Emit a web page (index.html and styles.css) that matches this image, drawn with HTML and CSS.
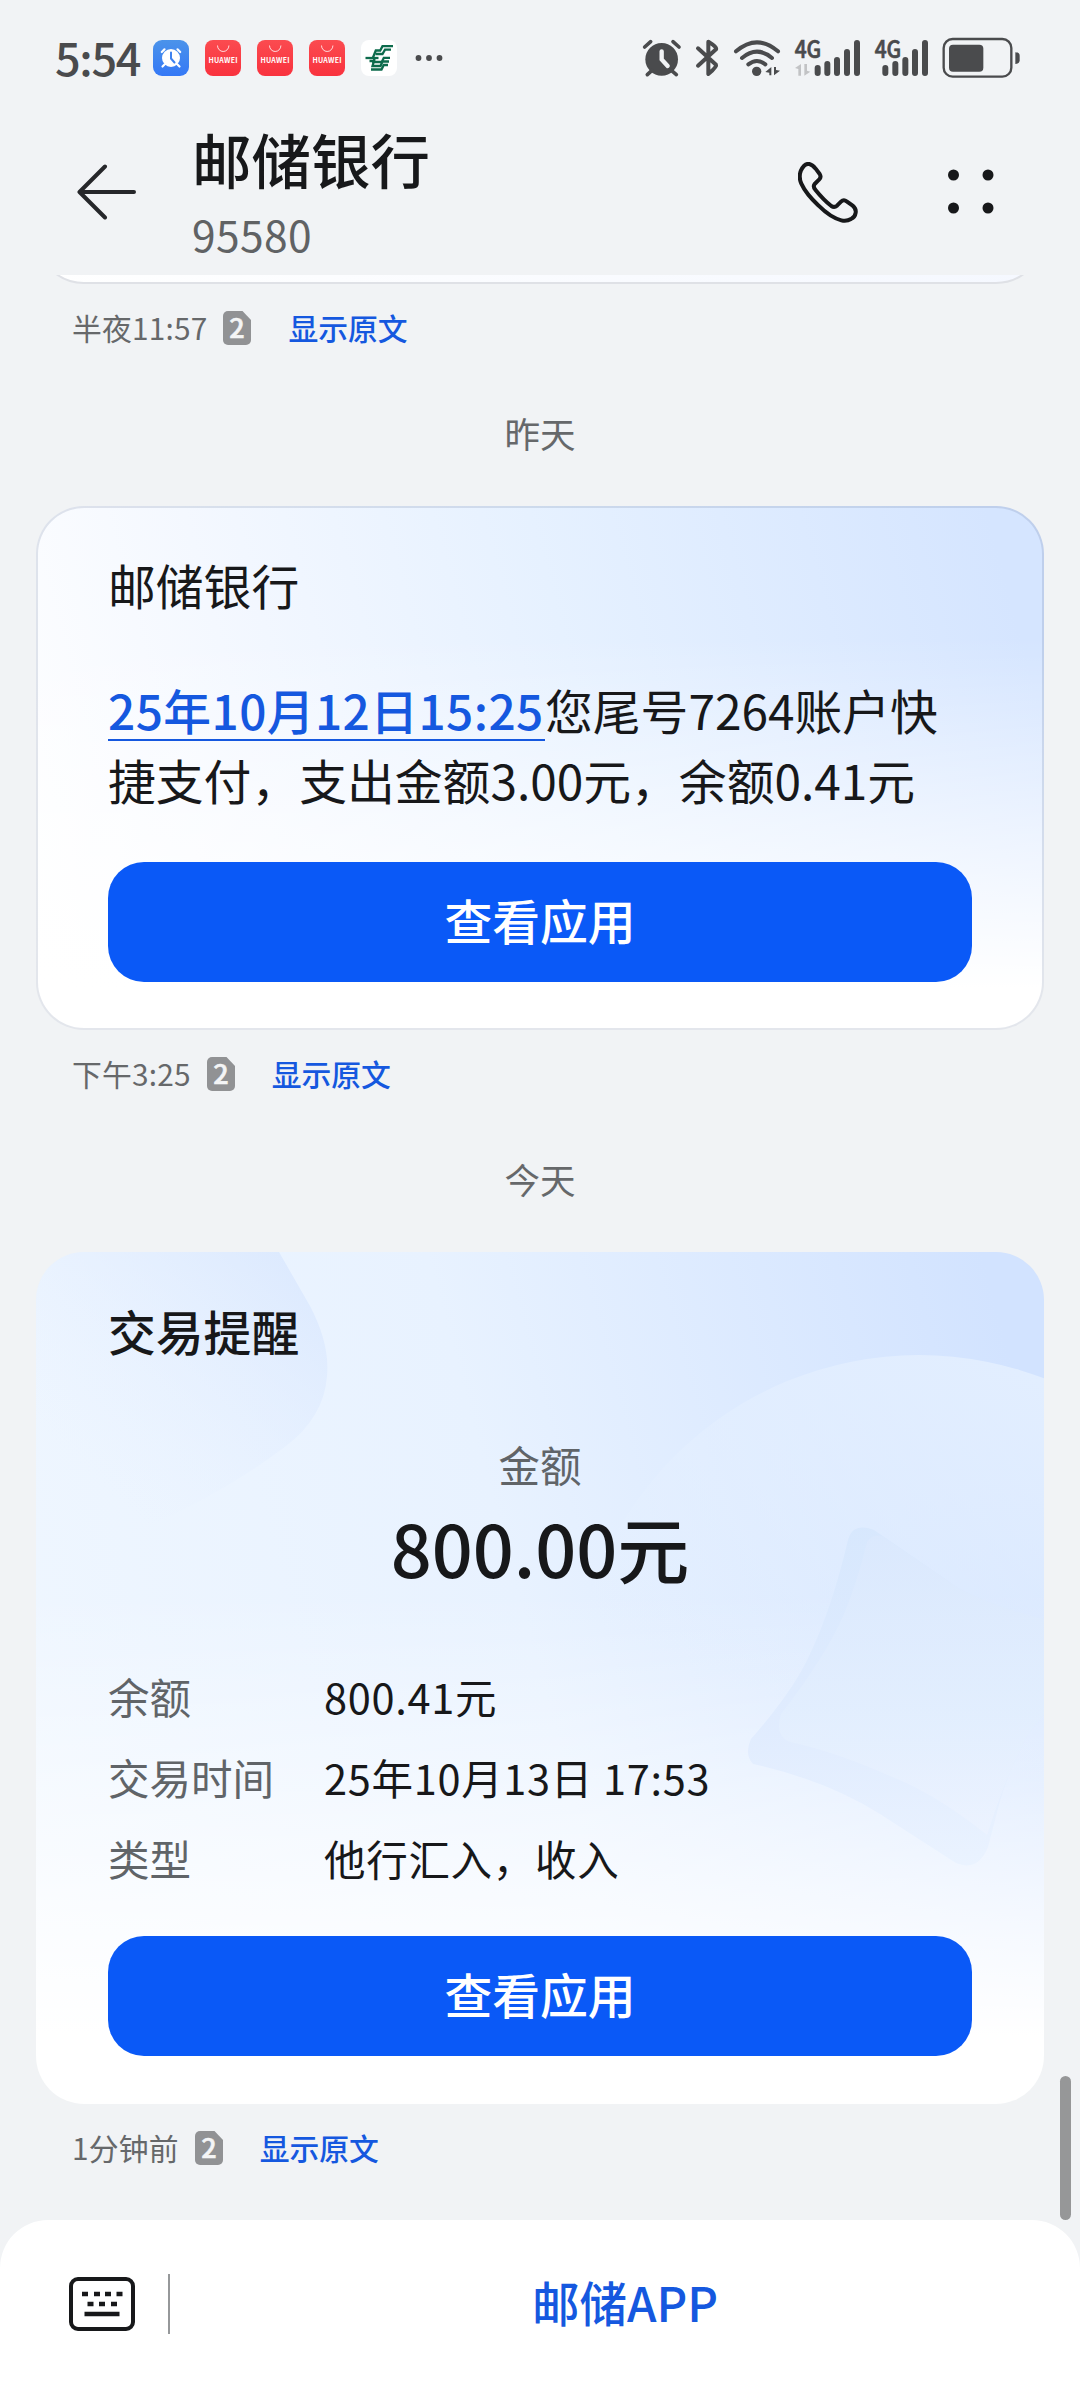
FILE: index.html
```html
<!DOCTYPE html>
<html lang="zh-CN">
<head>
<meta charset="utf-8">
<title>邮储银行</title>
<link rel="stylesheet" href="styles.css">
</head>
<body>
<svg class="defs" width="0" height="0" aria-hidden="true">
  <defs>
    <linearGradient id="red" x1="0" y1="0" x2="0" y2="1"><stop offset="0" stop-color="#fb4b50"/><stop offset="1" stop-color="#f9323e"/></linearGradient>
    <linearGradient id="clock" x1="0" y1="0" x2="0" y2="1"><stop offset="0" stop-color="#4b93ea"/><stop offset="1" stop-color="#3478f6"/></linearGradient>
    <symbol id="store" viewBox="0 0 36 36">
      <rect width="36" height="36" rx="8" fill="url(#red)"/>
      <path d="M12.500 5.500a5.700 6 0 0 0 11.400 0" fill="none" stroke="#fff" stroke-opacity=".8" stroke-width="1"/>
      <text x="18" y="23" text-anchor="middle" textLength="29" font-size="7" font-weight="700" fill="#fff">HUAWEI</text>
    </symbol>
    <symbol id="sim" viewBox="0 0 28 34">
      <path d="M5 0h14.500L28 9v20a5 5 0 0 1-5 5H5a5 5 0 0 1-5-5V5a5 5 0 0 1 5-5z" fill="#919294"/>
      <text x="14" y="27" text-anchor="middle" font-size="27" font-weight="500" fill="#f4f5f6" stroke="#f4f5f6" stroke-width=".6">2</text>
    </symbol>
  </defs>
</svg>
<div class="screen">
  <header class="header">
    <div class="status">
      <span class="time">5:54</span>
      <div class="apps">
        <svg width="36" height="36" viewBox="0 0 36 36">
          <rect width="36" height="36" rx="9" fill="url(#clock)"/>
          <path d="M11.500 24.500l-2 2M24.500 24.500l2 2M8.800 12l2.700-2.700M27.200 12l-2.700-2.700" stroke="#fff" stroke-width="2.200" stroke-linecap="round"/>
          <circle cx="18" cy="18" r="9" fill="#fff"/>
          <path d="M18 12.500v6l3.500 4" fill="none" stroke="#3d82f0" stroke-width="2" stroke-linecap="round"/>
        </svg>
        <svg width="36" height="36"><use href="#store"/></svg>
        <svg width="36" height="36"><use href="#store"/></svg>
        <svg width="36" height="36"><use href="#store"/></svg>
        <svg width="36" height="36" viewBox="0 0 36 36">
          <rect width="36" height="36" rx="8" fill="#fff"/>
          <g fill="none" stroke="#0d6b4c" stroke-width="2.300">
            <path d="M32 6.200H21.500L19.200 10.500H14.800L12 17.500"/>
            <path d="M30 9.700H24L21.500 14H14.500"/>
            <path d="M4.500 18H17.500"/>
            <path d="M29 17.800H22.800L20.800 22H12.500L13.500 18.500"/>
            <path d="M8.500 21H13L11.500 26H19.500L21.500 21.500H28"/>
            <path d="M10 29.500H20.500L22.700 25H27"/>
          </g>
        </svg>
        <svg class="more" width="28" height="36" viewBox="0 0 28 36" fill="#4a4b4d"><circle cx="3.500" cy="18" r="2.900"/><circle cx="14" cy="18" r="2.900"/><circle cx="24.500" cy="18" r="2.900"/></svg>
      </div>
      <svg class="signals" width="382" height="84" viewBox="0 -60 1146 252">
        <g transform="translate(-65 -45)" fill="#4a4b4d" stroke="none">
          <circle cx="127" cy="115" r="49"/>
          <path d="M76 78l18-16M179 78l-18-16M98 148l-14 13M156 148l15 13" stroke="#4a4b4d" stroke-width="11" stroke-linecap="round"/>
          <path d="M127 91v24l18 20" fill="none" stroke="#f1f3f5" stroke-width="13" stroke-linecap="round"/>
          <path d="M236 82l54 49q4 6-23 28V62q27 17 23 23l-54 49" fill="none" stroke="#4a4b4d" stroke-width="12" stroke-linecap="round" stroke-linejoin="round"/>
          <g fill="none" stroke="#4a4b4d" stroke-width="12" stroke-linecap="round">
            <path d="M350 91q63-54 126 0M368 111q45-38 90 0M387 130q26-20 51 0"/>
          </g>
          <circle cx="412" cy="151" r="14"/>
          <path d="M456 138v25h-6v-8l-12-2zM464 138h6v9l12 2-18 14z"/>
          <text x="526" y="110" font-size="71" font-weight="500" textLength="80" lengthAdjust="spacingAndGlyphs" stroke="#4a4b4d" stroke-width="2">4G</text>
          <path d="M545 129v35h-8v-20l-10-3zM555 129h8v20l10 3-18 12z" fill="#c2c3c5"/>
          <g stroke="#4a4b4d" stroke-width="18" stroke-linecap="round">
            <path d="M595 141v15M624 129v27M653 117v39M683 93v63M713 66v90"/>
            <path d="M798 141v15M828 129v27M858 117v39M887 93v63M917 66v90"/>
          </g>
          <text x="766" y="110" font-size="71" font-weight="500" textLength="80" lengthAdjust="spacingAndGlyphs" stroke="#4a4b4d" stroke-width="2">4G</text>
          <rect x="973" y="54" width="203" height="113" rx="27" fill="none" stroke="#4a4b4d" stroke-width="7"/>
          <rect x="989" y="71" width="103" height="81" rx="12"/>
          <path d="M1188 94q13 0 13 10v14q0 10-13 11z"/>
        </g>
      </svg>
    </div>
    <div class="titlebar">
      <svg class="back" width="60" height="56" viewBox="0 0 60 56" fill="none" stroke="#26272a" stroke-width="4" stroke-linecap="round" stroke-linejoin="round"><path d="M57 28H3M28 2.500L2.500 28 28 53.500"/></svg>
      <div class="who"><h1>邮储银行</h1><p>95580</p></div>
      <svg class="call" width="60" height="61" viewBox="0 0 180 183" fill="none" stroke="#17181a" stroke-width="12" stroke-linejoin="round"><path d="M34 6Q43 8 53 20l12 16q6 10-2 17l-13 13q-6 8 2 17 25 31 48 49 9 6 17-1l12-12q8-8 17-1l18 13q11 9 9 21-2 14-14 19-13 8-29 4-32-8-68-44Q24 96 10 65 1 45 9 25 20 3 34 6z"/></svg>
      <svg class="grid" width="46" height="46" viewBox="0 0 46 46" fill="#17181a"><circle cx="5.500" cy="6" r="5.500"/><circle cx="40" cy="6" r="5.500"/><circle cx="5.500" cy="39" r="5.500"/><circle cx="40" cy="39" r="5.500"/></svg>
    </div>
  </header>

  <main class="thread">
    <div class="clip"><div class="card previous"></div></div>
    <div class="meta"><span class="when">半夜11:57</span><svg width="28" height="34"><use href="#sim"/></svg><a class="original">显示原文</a></div>
    <div class="day">昨天</div>

    <article class="card notice">
      <h2>邮储银行</h2>
      <p class="body"><a class="date">25年10月12日15:25</a>您尾号7264账户快<br>捷支付，支出金额3.00元，余额0.41元</p>
      <button class="open">查看应用</button>
    </article>
    <div class="meta"><span class="when">下午3:25</span><svg width="28" height="34"><use href="#sim"/></svg><a class="original">显示原文</a></div>
    <div class="day">今天</div>

    <article class="card deal">
      <svg class="art" viewBox="0 0 1008 852" aria-hidden="true">
        <defs>
          <linearGradient id="leaf" x1="1" y1="0" x2=".25" y2=".8"><stop offset="0" stop-color="#dae8fe"/><stop offset="1" stop-color="#e8f1ff" stop-opacity="0"/></linearGradient>
          <linearGradient id="disc" x1=".6" y1="0" x2=".35" y2=".55"><stop offset="0" stop-color="#e2eeff"/><stop offset="1" stop-color="#e8f2ff" stop-opacity="0"/></linearGradient>
          <linearGradient id="star" x1="0" y1="0" x2="0" y2="1"><stop offset="0" stop-color="#d6e7fd"/><stop offset=".6" stop-color="#dfebfe"/><stop offset="1" stop-color="#e9f2ff"/></linearGradient>
          <linearGradient id="face" x1="0" y1="0" x2="0" y2="1"><stop offset="0" stop-color="#dce9fd"/><stop offset=".6" stop-color="#e3effe"/><stop offset="1" stop-color="#edf3ff"/></linearGradient>
        </defs>
        <path d="M0 0H243L274 54Q294 92 291 124Q288 165 250 194Q190 240 100 280L0 300z" fill="url(#leaf)"/>
        <circle cx="883" cy="449" r="346" fill="url(#disc)"/>
        <path d="M812 288Q817 270 838 278L924 337Q962 356 1008 367V463Q990 482 984 499Q972 522 964 549L952 595Q942 620 920 611L844 562Q790 528 717 512Q708 502 715 487Q758 438 774 402Q796 356 812 288z" fill="url(#star)" opacity=".85"/>
        <path d="M831 290Q836 282 846 284L924 337Q962 356 1008 367V463Q990 482 984 499Q968 530 951 583Q900 542 854 524Q800 500 754 490Q738 484 745 462Q790 404 808 362Q822 328 831 290z" fill="url(#face)" opacity=".75"/>
      </svg>
      <h2>交易提醒</h2>
      <div class="sum"><span>金额</span><strong>800.00元</strong></div>
      <dl class="facts">
        <dt>余额</dt><dd>800.41元</dd>
        <dt>交易时间</dt><dd>25年10月13日 17:53</dd>
        <dt>类型</dt><dd>他行汇入，收入</dd>
      </dl>
      <button class="open">查看应用</button>
    </article>
    <div class="meta"><span class="when">1分钟前</span><svg width="28" height="34"><use href="#sim"/></svg><a class="original">显示原文</a></div>
    <div class="scrollbar"></div>
  </main>

  <footer class="bar">
    <svg class="keys" width="66" height="54" viewBox="0 0 66 54">
      <rect x="2" y="2" width="62" height="50" rx="7" fill="none" stroke="#17181a" stroke-width="4"/>
      <path d="M13 17h6M25 17h6M36 17h6M47.500 17h6M18.500 27h6M30 27h6M42 27h6M15.500 37h35" stroke="#17181a" stroke-width="4.500"/>
    </svg>
    <span class="rule"></span>
    <a class="menu">邮储APP</a>
  </footer>
</div>
</body>
</html>
```
FILE: styles.css
```css
* { box-sizing: border-box; margin: 0; padding: 0; }

body {
  background: #f1f3f5;
  color: #17181a;
  font-family: "Noto Sans CJK SC", "Noto Sans", sans-serif;
}

svg { display: block; flex: none; }
.defs { position: absolute; }

.screen {
  width: 1080px;
  height: 2388px;
  display: flex;
  flex-direction: column;
  overflow: hidden;
}

/* Header */
.header { height: 275px; flex: none; }

.status {
  height: 116px;
  display: flex;
  align-items: center;
  padding: 0 57px 0 55px;
}
.time {
  width: 98px;
  padding-bottom: 3px;
  color: #4a4b4d;
  font-size: 45px;
  font-weight: 500;
  letter-spacing: -1.300px;
  line-height: 60px;
  white-space: nowrap;
}
.apps { display: flex; gap: 16px; }
.more { margin-left: 2px; }
.signals { margin-left: auto; }

.titlebar {
  height: 159px;
  display: flex;
  padding: 0 86px 0 77px;
}
.back { margin-top: 48px; }
.who { margin-left: 55px; }
.who h1 { font-size: 59.500px; font-weight: 500; line-height: 84px; }
.who p {
  color: #606264;
  font-size: 42.500px;
  letter-spacing: .4px;
  line-height: 68px;
}
.call { margin: 46px 0 0 auto; }
.grid { margin: 53px 0 0 90px; }

/* Message thread */
.thread {
  position: relative;
  height: 1945px;
  flex: none;
  padding: 0 36px;
}
.clip {
  height: 9px;
  display: flex;
  align-items: flex-end;
  overflow: hidden;
}
.card { position: relative; border-radius: 48px; }
.previous {
  width: 100%;
  height: 200px;
  flex: none;
  border: 2px solid #dfe1e6;
  background: linear-gradient(90deg, #fff, #f5f8ff);
}
.meta {
  height: 90px;
  display: flex;
  align-items: center;
  padding: 0 0 2px 36px;
  color: #66686a;
  font-size: 29.800px;
  line-height: 40px;
}
.meta span, .meta a { padding-bottom: 2px; }
.when { letter-spacing: .2px; }
.meta svg { margin-left: 16px; }
.original { margin-left: 37px; color: #1558df; font-weight: 500; }
.day {
  height: 132px;
  padding-top: 33px;
  color: #66686a;
  font-size: 35.500px;
  line-height: 52px;
  text-align: center;
}

.card h2 { font-size: 47.800px; line-height: 70px; }
.open {
  display: block;
  width: 100%;
  height: 120px;
  padding-bottom: 4px;
  border: 0;
  border-radius: 36px;
  background: #0a59f7;
  color: #fff;
  font: 500 47.800px/110px "Noto Sans CJK SC", sans-serif;
}

.notice {
  height: 524px;
  padding: 42px 70px 0;
  border: 2px solid rgba(60, 80, 120, .14);
  background:
    linear-gradient(180deg, rgba(255, 255, 255, 0) 25%, #fff 92%),
    linear-gradient(75deg, #fff 0%, #f4f8ff 25%, #e6f1ff 55%, #d5e5ff 95%);
  background-clip: border-box;
  background-origin: border-box;
}
.notice h2 { font-weight: 400; }
.body {
  margin-top: 55px;
  font-size: 47.800px;
  line-height: 70px;
  white-space: nowrap;
}
.date {
  display: inline-block;
  width: 437px;
  height: 66px;
  border-bottom: 2px solid #1558df;
  color: #1558df;
  font-weight: 500;
  letter-spacing: .4px;
  vertical-align: top;
}
.notice .open { margin-top: 47px; }

.deal {
  height: 852px;
  padding: 44px 72px 0;
  overflow: hidden;
  background:
    linear-gradient(180deg, rgba(255, 255, 255, 0) 40%, #fff 92%),
    linear-gradient(75deg, #f0f7ff 0%, #e8f2ff 50%, #d2e3ff 95%);
}
.art { position: absolute; inset: 0; }
.deal > :not(.art) { position: relative; }
.deal h2 { font-weight: 500; }
.sum {
  margin-top: 68px;
  display: flex;
  flex-direction: column;
  align-items: center;
}
.sum span { color: #606468; font-size: 41.500px; line-height: 60px; }
.sum strong {
  padding-bottom: 4px;
  font-size: 72px;
  font-weight: 500;
  line-height: 106px;
}
.facts {
  margin-top: 52px;
  display: grid;
  grid-template-columns: 216px 1fr;
  grid-auto-rows: 81px;
  font-size: 41.500px;
  line-height: 81px;
}
.facts dt { color: #606468; }
.facts dd { letter-spacing: .7px; }
.deal .open { margin-top: 37px; }

.scrollbar {
  position: absolute;
  right: 9px;
  bottom: 0;
  width: 11px;
  height: 144px;
  border-radius: 6px;
  background: #969798;
}

/* Bottom bar */
.bar {
  height: 168px;
  flex: none;
  display: flex;
  align-items: center;
  padding-left: 69px;
  border-radius: 48px 48px 0 0;
  background: #fff;
}
.rule { width: 2px; height: 60px; margin-left: 33px; background: #96989a; }
.menu {
  flex: 1;
  padding-bottom: 4px;
  color: #1558df;
  font-size: 47.500px;
  font-weight: 500;
  line-height: 70px;
  text-align: center;
}
```
